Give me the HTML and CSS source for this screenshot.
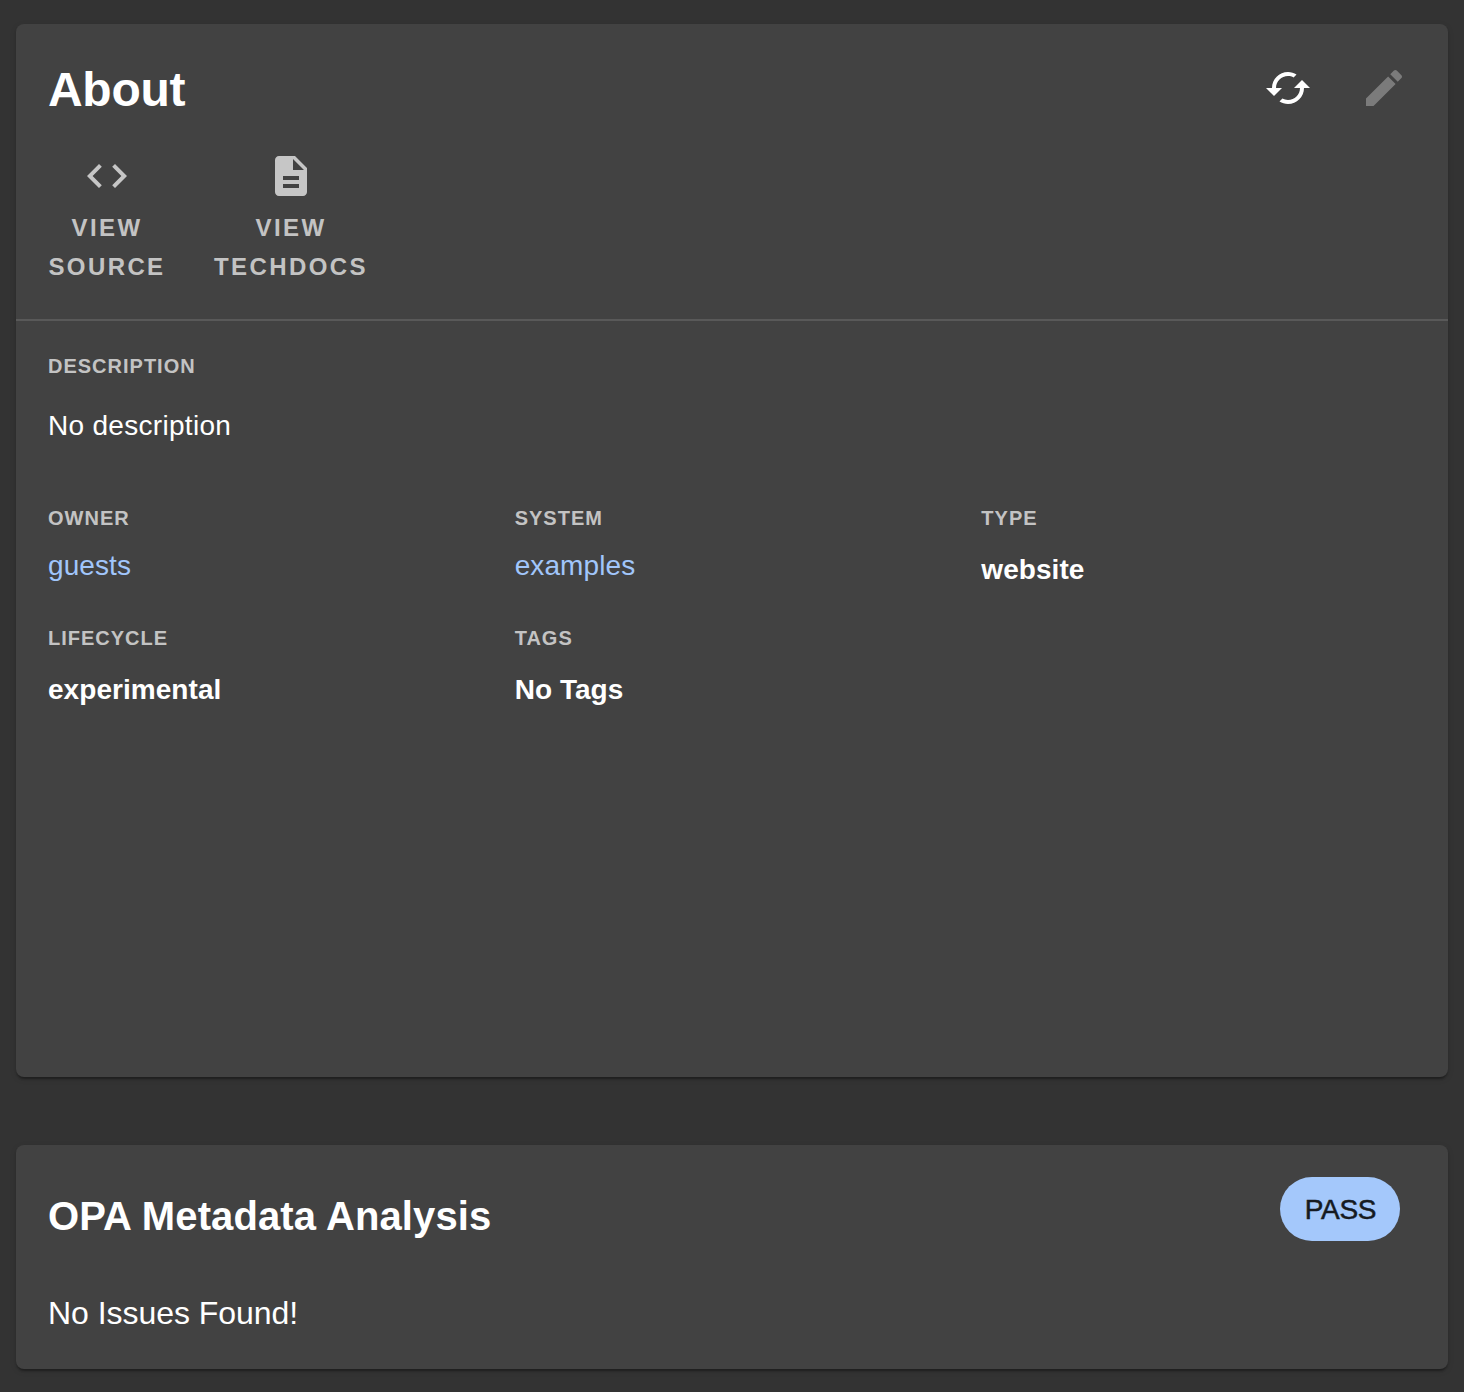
FILE: index.html
```html
<!DOCTYPE html>
<html lang="en">
<head>
<meta charset="utf-8">
<title>Entity overview</title>
<link rel="stylesheet" href="styles.css">
</head>
<body>
<main class="page">
  <section class="card about">
    <header class="about-header">
      <h2 class="about-title">About</h2>
      <div class="actions">
        <button class="icon-button" aria-label="Refresh">
          <svg class="icon" viewBox="0 0 24 24"><path d="M19 8l-4 4h3c0 3.31-2.69 6-6 6-1.01 0-1.97-.25-2.8-.7l-1.46 1.46C8.97 19.54 10.43 20 12 20c4.42 0 8-3.58 8-8h3l-4-4zM6 12c0-3.31 2.69-6 6-6 1.01 0 1.97.25 2.8.7l1.46-1.46C15.03 4.46 13.57 4 12 4c-4.42 0-8 3.58-8 8H1l4 4 4-4H6z"/></svg>
        </button>
        <button class="icon-button disabled" aria-label="Edit" disabled>
          <svg class="icon" viewBox="0 0 24 24"><path d="M3 17.25V21h3.75L17.81 9.94l-3.75-3.75L3 17.25zM20.71 7.04c.39-.39.39-1.02 0-1.41l-2.34-2.34c-.39-.39-1.02-.39-1.41 0l-1.83 1.83 3.75 3.75 1.83-1.83z"/></svg>
        </button>
      </div>
    </header>
    <nav class="links">
      <a class="link source">
        <svg class="icon" viewBox="0 0 24 24"><path d="M9.4 16.6L4.8 12l4.6-4.6L8 6l-6 6 6 6 1.4-1.4zm5.2 0l4.6-4.6-4.6-4.6L16 6l6 6-6 6-1.4-1.4z"/></svg>
        <span>View<br>Source</span>
      </a>
      <a class="link docs">
        <svg class="icon" viewBox="0 0 24 24"><path d="M14 2H6c-1.1 0-1.99.9-1.99 2L4 20c0 1.1.89 2 1.99 2H18c1.1 0 2-.9 2-2V8l-6-6zm2 16H8v-2h8v2zm0-4H8v-2h8v2zm-3-5V3.5L18.500 9H13z"/></svg>
        <span>View<br>TechDocs</span>
      </a>
    </nav>
    <div class="details">
      <div class="field wide">
        <h3 class="label">Description</h3>
        <p class="description">No description</p>
      </div>
      <div class="field">
        <h3 class="label">Owner</h3>
        <a class="entity">guests</a>
      </div>
      <div class="field">
        <h3 class="label">System</h3>
        <a class="entity">examples</a>
      </div>
      <div class="field">
        <h3 class="label">Type</h3>
        <p class="value">website</p>
      </div>
      <div class="field">
        <h3 class="label">Lifecycle</h3>
        <p class="value">experimental</p>
      </div>
      <div class="field">
        <h3 class="label">Tags</h3>
        <p class="value">No Tags</p>
      </div>
    </div>
  </section>

  <section class="card analysis">
    <header class="analysis-header">
      <h2 class="analysis-title">OPA Metadata Analysis</h2>
      <span class="chip">PASS</span>
    </header>
    <p class="result">No Issues Found!</p>
  </section>
</main>
</body>
</html>
```
FILE: styles.css
```css
* {
  box-sizing: border-box;
}

body {
  margin: 0;
  background: #333;
  color: #fff;
  font-family: "Liberation Sans", Arial, sans-serif;
}

h2,
h3,
p {
  margin: 0;
}

.page {
  display: flex;
  flex-direction: column;
  gap: 68px;
  min-height: 1392px;
  padding: 24px 16px 23px;
}

.card {
  background: #424242;
  border-radius: 8px;
  box-shadow:
    0 4px 2px -2px rgba(0, 0, 0, 0.2),
    0 2px 2px rgba(0, 0, 0, 0.14),
    0 2px 6px rgba(0, 0, 0, 0.12);
}

.icon {
  display: block;
  width: 48px;
  height: 48px;
  fill: currentColor;
}

.about {
  height: 1053px;
}

.about-header {
  display: flex;
  justify-content: space-between;
  align-items: center;
  height: 128px;
  padding: 0 16px 0 32px;
}

.about-title {
  padding-top: 3px;
  font-size: 48px;
  line-height: 56px;
  letter-spacing: -0.3px;
}

.actions {
  display: flex;
}

.icon-button {
  padding: 24px;
  border: 0;
  background: none;
  color: #fff;
}

.icon-button.disabled {
  color: rgba(255, 255, 255, 0.3);
}

.links {
  display: flex;
  gap: 47px;
  height: 169px;
  padding: 0 32px;
  border-bottom: 2px solid rgba(255, 255, 255, 0.12);
}

.link {
  display: flex;
  flex-direction: column;
  align-items: center;
  gap: 8px;
  color: rgba(255, 255, 255, 0.7);
  font-size: 24px;
  font-weight: bold;
  line-height: 39px;
  letter-spacing: 2.4px;
  text-align: center;
  text-transform: uppercase;
}

.source {
  width: 118px;
}

.docs {
  width: 156px;
}

.details {
  display: grid;
  grid-template-columns: repeat(3, 1fr);
  grid-template-rows: 152px 120px 120px;
  padding: 33px 0 0 32px;
}

.wide {
  grid-column: 1 / -1;
}

.label {
  color: rgba(255, 255, 255, 0.7);
  font-size: 20px;
  line-height: 24px;
  letter-spacing: 1px;
  text-transform: uppercase;
}

.description {
  margin-top: 28px;
  font-size: 28px;
  line-height: 40px;
  letter-spacing: 0.3px;
}

.entity {
  display: block;
  margin-top: 16px;
  color: #a1c6fb;
  font-size: 28px;
  line-height: 40px;
  letter-spacing: 0.1px;
}

.value {
  margin-top: 20px;
  font-size: 28px;
  font-weight: bold;
  line-height: 40px;
  letter-spacing: 0.05px;
}

.analysis {
  height: 224px;
  padding: 32px 48px 0 32px;
}

.analysis-header {
  display: flex;
  justify-content: space-between;
  align-items: flex-start;
}

.analysis-title {
  padding-top: 11px;
  font-size: 40px;
  line-height: 56px;
  letter-spacing: 0.12px;
}

.chip {
  width: 120px;
  height: 64px;
  padding-left: 1px;
  border-radius: 32px;
  background: #a4c8fb;
  color: #151a21;
  font-size: 28px;
  line-height: 66px;
  letter-spacing: -0.3px;
  text-align: center;
  -webkit-text-stroke: 0.5px #151a21;
}

.result {
  margin-top: 45px;
  font-size: 32px;
  line-height: 48px;
  letter-spacing: -0.05px;
}
```
